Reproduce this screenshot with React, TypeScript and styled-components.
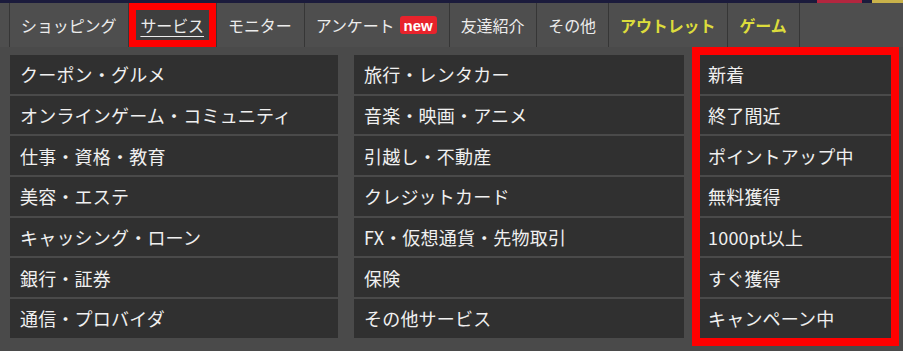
import React from 'react';
import styled, { createGlobalStyle } from 'styled-components';

const GlobalStyle = createGlobalStyle`
  html, body {
    margin: 0;
    padding: 0;
    background: #4a4a4a;
  }
  body {
    font-family: "Noto Sans CJK JP", "Noto Sans", sans-serif;
  }
`;

interface TabItem {
  label: string;
  active?: boolean;
  accent?: boolean;
  badge?: string;
}

const tabs: TabItem[] = [
  { label: 'ショッピング' },
  { label: 'サービス', active: true },
  { label: 'モニター' },
  { label: 'アンケート', badge: 'new' },
  { label: '友達紹介' },
  { label: 'その他' },
  { label: 'アウトレット', accent: true },
  { label: 'ゲーム', accent: true },
];

const leftItems = [
  'クーポン・グルメ',
  'オンラインゲーム・コミュニティ',
  '仕事・資格・教育',
  '美容・エステ',
  'キャッシング・ローン',
  '銀行・証券',
  '通信・プロバイダ',
];

const middleItems = [
  '旅行・レンタカー',
  '音楽・映画・アニメ',
  '引越し・不動産',
  'クレジットカード',
  'FX・仮想通貨・先物取引',
  '保険',
  'その他サービス',
];

const rightItems = [
  '新着',
  '終了間近',
  'ポイントアップ中',
  '無料獲得',
  '1000pt以上',
  'すぐ獲得',
  'キャンペーン中',
];

const App: React.FC = () => {
  return (
    <Page>
      <GlobalStyle />
      <TopStrip>
        <StripFill />
        <StripSegment color="#b3263f" width={45} />
        <StripSegment color="transparent" width={10} />
        <StripSegment color="#c9b24a" width={31} />
      </TopStrip>
      <TabBar>
        {tabs.map((tab) => (
          <Tab key={tab.label} active={tab.active} accent={tab.accent}>
            <TabLabel active={tab.active}>{tab.label}</TabLabel>
            {tab.badge && <Badge>{tab.badge}</Badge>}
          </Tab>
        ))}
      </TabBar>
      <Menu>
        <Column>
          {leftItems.map((item) => (
            <Row key={item}>{item}</Row>
          ))}
        </Column>
        <Column>
          {middleItems.map((item) => (
            <Row key={item}>{item}</Row>
          ))}
        </Column>
        <Column highlight>
          {rightItems.map((item) => (
            <Row key={item} narrow>
              {item}
            </Row>
          ))}
        </Column>
      </Menu>
    </Page>
  );
};

export default App;

const Page = styled.div`
  width: 903px;
  height: 351px;
  background: #4a4a4a;
  overflow: hidden;
`;

const TopStrip = styled.div`
  display: flex;
  height: 3px;
  background: #1b1b3c;
`;

const StripFill = styled.div`
  flex: 1;
`;

const StripSegment = styled.div<{ color: string; width: number }>`
  flex: 0 0 ${(p) => p.width}px;
  background: ${(p) => p.color};
`;

const TabBar = styled.div`
  display: flex;
  height: 44px;
  padding-left: 9px;
  background: #4e4e4e;
`;

const Tab = styled.div<{ active?: boolean; accent?: boolean }>`
  display: flex;
  align-items: center;
  gap: 5px;
  padding: 0 12px 0 11px;
  border-left: 1px solid #363636;
  color: ${(p) => (p.accent ? '#dcdc3c' : '#ececec')};
  font-size: 16px;
  font-weight: ${(p) => (p.accent ? 700 : 400)};
  line-height: 1;
  letter-spacing: -0.1px;
  white-space: nowrap;
  background: ${(p) => (p.active ? '#3e3e3e' : 'transparent')};
  box-shadow: ${(p) => (p.active ? 'inset 0 0 0 7px #ff0000' : 'none')};

  &:last-child {
    border-right: 1px solid #363636;
  }
`;

const TabLabel = styled.span<{ active?: boolean }>`
  color: inherit;
  text-decoration: ${(p) => (p.active ? 'underline' : 'none')};
  text-underline-offset: 4px;
  text-decoration-thickness: 1px;
`;

const Badge = styled.span`
  display: inline-flex;
  align-items: center;
  justify-content: center;
  height: 18px;
  padding: 0 4px;
  border-radius: 3px;
  background: #e8232c;
  color: #ffffff;
  font-family: "Liberation Sans", Arial, sans-serif;
  font-size: 15px;
  font-weight: 700;
  letter-spacing: 0;
`;

const Menu = styled.div`
  display: grid;
  grid-template-columns: 328px 330px 191px;
  column-gap: 16px;
  padding: 8px 0 0 10px;
`;

const Column = styled.div<{ highlight?: boolean }>`
  display: flex;
  flex-direction: column;
  gap: 2px;
  box-shadow: ${(p) => (p.highlight ? '0 0 0 8px #ff0000' : 'none')};
`;

const Row = styled.div<{ narrow?: boolean }>`
  display: flex;
  align-items: center;
  height: 38.7px;
  padding-left: ${(p) => (p.narrow ? 8 : 10)}px;
  background: #303030;
  color: #f0f0f0;
  font-size: 18px;
  line-height: 1;
  letter-spacing: 0.2px;
  white-space: nowrap;
`;
